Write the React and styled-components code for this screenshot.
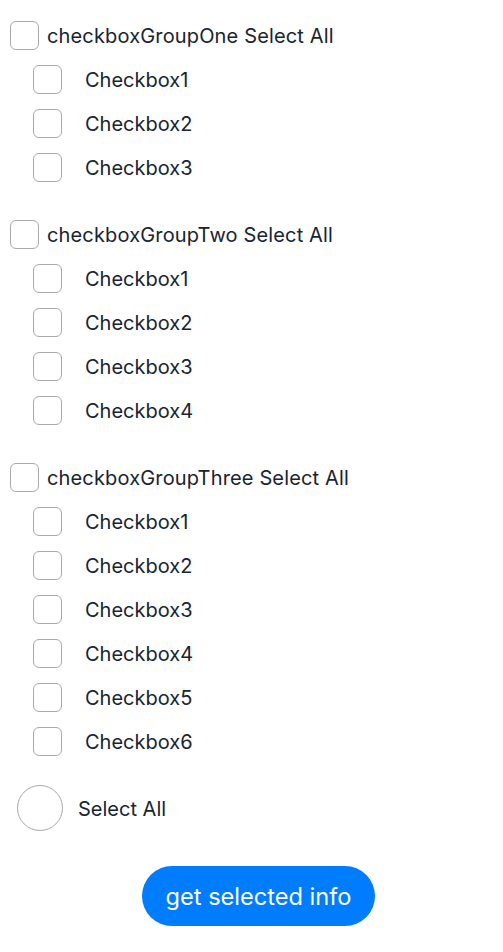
import React from "react";
import styled, { createGlobalStyle } from "styled-components";

const Global = createGlobalStyle`
  html, body { margin: 0; padding: 0; background: #ffffff; }
  body { font-family: "Inter", "Noto Sans", sans-serif; color: #182431; }
`;

const Page = styled.div`
  width: 503px;
  height: 952px;
  padding-top: 13px;
  box-sizing: border-box;
  display: flex;
  flex-direction: column;
`;

const Group = styled.div`
  display: flex;
  flex-direction: column;
  margin-bottom: 23px;
`;

const Row = styled.div`
  height: 44px;
  display: flex;
  align-items: center;
  padding-left: ${(p) => (p.$child ? "33px" : "10px")};
`;

const Box = styled.span`
  width: 29px;
  height: 29px;
  box-sizing: border-box;
  border: 1.5px solid #a8a9ab;
  border-radius: 6px;
  flex-shrink: 0;
  margin-right: ${(p) => (p.$child ? "23px" : "8px")};
`;

const Label = styled.span`
  font-size: 20px;
  line-height: 1;
  padding-top: 1px;
  color: #182431;
  white-space: nowrap;
  letter-spacing: ${(p) => (p.$head ? "0.15px" : "0")};
`;

const SelectAllRow = styled.div`
  height: 46px;
  display: flex;
  align-items: center;
  padding-left: 17px;
  margin-top: -1px;
`;

const Circle = styled.span`
  width: 46px;
  height: 46px;
  box-sizing: border-box;
  border: 1.5px solid #a8a9ab;
  border-radius: 50%;
  margin-right: 15px;
`;

const Footer = styled.div`
  display: flex;
  justify-content: center;
  padding-left: 14px;
  margin-top: 35px;
`;

const Button = styled.button`
  width: 233px;
  height: 60px;
  border: none;
  border-radius: 30px;
  background: #007dff;
  color: #ffffff;
  font-family: "Inter", "Noto Sans", sans-serif;
  font-size: 23.6px;
  padding: 0;
`;

const groups = [
  { name: "checkboxGroupOne", count: 3 },
  { name: "checkboxGroupTwo", count: 4 },
  { name: "checkboxGroupThree", count: 6 },
];

export default function App() {
  return (
    <>
      <Global />
      <Page>
        {groups.map((g) => (
          <Group key={g.name}>
            <Row>
              <Box />
              <Label $head>{g.name} Select All</Label>
            </Row>
            {Array.from({ length: g.count }, (_, i) => (
              <Row $child key={i}>
                <Box $child />
                <Label>Checkbox{i + 1}</Label>
              </Row>
            ))}
          </Group>
        ))}
        <SelectAllRow>
          <Circle />
          <Label>Select All</Label>
        </SelectAllRow>
        <Footer>
          <Button>get selected info</Button>
        </Footer>
      </Page>
    </>
  );
}
